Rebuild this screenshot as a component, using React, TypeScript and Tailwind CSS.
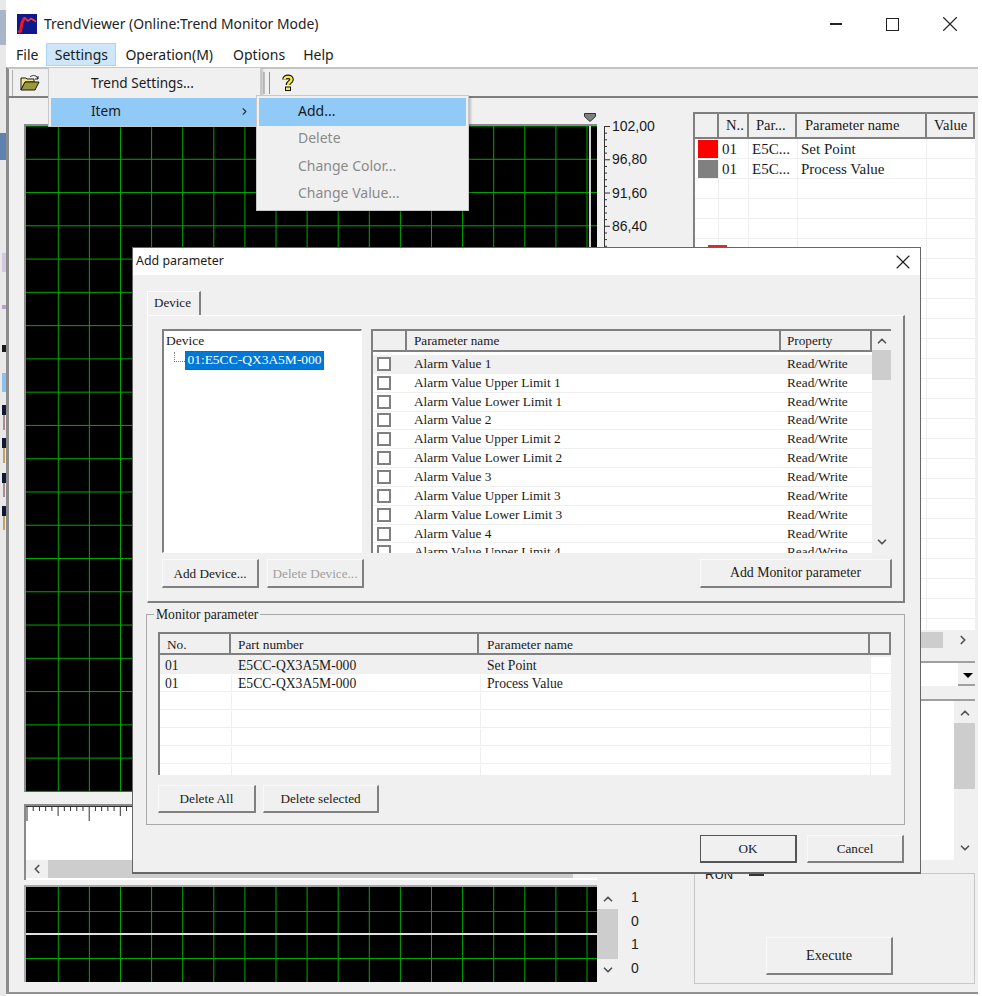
import { ChevronDown, ChevronLeft, ChevronRight, ChevronUp, X } from "lucide-react";
import type { ReactNode } from "react";

const gridXs = Array.from({ length: 18 }, (_, i) => 32.3 + i * 31.1);
const mainYs = Array.from({ length: 21 }, (_, i) => i * 33.27);

const alarmRows = [
  "Alarm Value 1",
  "Alarm Value Upper Limit 1",
  "Alarm Value Lower Limit 1",
  "Alarm Value 2",
  "Alarm Value Upper Limit 2",
  "Alarm Value Lower Limit 2",
  "Alarm Value 3",
  "Alarm Value Upper Limit 3",
  "Alarm Value Lower Limit 3",
  "Alarm Value 4",
  "Alarm Value Upper Limit 4",
];

// whatever of the desktop shows left of the window
const desktopBits = [
  "h-[10px]",
  "h-[35px] bg-[#a9b6c8]",
  "h-[88px]",
  "h-[27px] bg-[#5f82b0]",
  "h-[93px]",
  "ml-[2px] h-[19px] bg-[#d4c8e0]",
  "h-[33px]",
  "ml-[2px] h-[4px] bg-[#b6a0cc]",
  "h-[36px]",
  "ml-[2px] h-[7px] bg-[#1a1a1a]",
  "h-[21px]",
  "ml-[2px] h-[19px] bg-[#8fc0ec]",
  "h-[13px]",
  "ml-[2px] h-[10px] bg-[#111830]",
  "ml-[3px] h-[15px] w-[2px] bg-[#b08a90]",
  "h-[8px]",
  "ml-[2px] h-[10px] bg-[#111830]",
  "ml-[3px] h-[15px] w-[2px] bg-[#c8a060]",
  "h-[10px]",
  "ml-[2px] h-[10px] bg-[#111830]",
  "ml-[3px] h-[14px] w-[2px] bg-[#b08a90]",
  "h-[9px]",
  "ml-[2px] h-[10px] bg-[#111830]",
  "ml-[3px] h-[14px] w-[2px] bg-[#c8a060]",
];

function Grid({ height, ys, children }: { height: number; ys: number[]; children?: ReactNode }) {
  return (
    <svg width="571" height={height} className="block shrink-0">
      <rect width="571" height={height} fill="#000" />
      {gridXs.map((x) => (
        <line key={x} x1={x} x2={x} y1="0" y2={height} stroke="#00a800" strokeWidth="1" />
      ))}
      {ys.map((y) => (
        <line key={y} x1="0" x2="571" y1={y} y2={y} stroke="#00a800" strokeWidth="1" />
      ))}
      {children}
    </svg>
  );
}

function Btn({ children, disabled, size, def }: { children: ReactNode; disabled?: boolean; size?: string; def?: boolean }) {
  return (
    <div
      className={`flex h-full items-center justify-center border-t border-l border-b-2 border-r-2 bg-[#f0f0f0] ${size ?? "text-[13.2px]"} ${
        def ? "border-[#555555]" : "border-t-[#fafafa] border-l-[#fafafa] border-b-[#808080] border-r-[#808080]"
      } ${disabled ? "text-[#a0a0a0]" : "text-[#1a1a1a]"}`}
    >
      {children}
    </div>
  );
}

function HeaderCell({ children, width }: { children?: ReactNode; width: string }) {
  return (
    <div className={`flex h-full shrink-0 items-center overflow-hidden whitespace-nowrap border-r-2 border-b-2 border-[#808080] bg-[#f0f0f0] ${width}`}>
      {children}
    </div>
  );
}

function AppIcon() {
  return (
    <svg width="20" height="20" viewBox="0 0 20 20" className="shrink-0">
      <rect width="20" height="20" fill="#10188c" />
      <path d="M1.500 18.500 L3.500 17 L5 9 L7.500 3.500" fill="none" stroke="#f01818" strokeWidth="3" />
      <path d="M7.500 3.500 L11 7 L14 4.500 L19 7.500" fill="none" stroke="#f04040" strokeWidth="1.600" />
    </svg>
  );
}

function FolderIcon() {
  return (
    <svg width="20" height="18" viewBox="0 0 20 18">
      <path d="M1 4h5l1 1h7v3H5L1 16z" fill="#f4e58a" stroke="#1c1c10" strokeWidth="1" />
      <path d="M5 8h14l-4 8H1z" fill="#9a9a3c" stroke="#1c1c10" strokeWidth="1" />
      <path d="M10 3c2-2 5-2 7 0l1 2m0-3v3h-3" fill="none" stroke="#222" strokeWidth="1" />
    </svg>
  );
}

function HelpIcon() {
  return (
    <svg width="12" height="17" viewBox="0 0 12 17">
      <path d="M2.500 5.500C2.500 2 9.500 2 9.500 5.500C9.500 8 6 8 6 11" fill="none" stroke="#111" strokeWidth="4.600" />
      <path d="M2.500 5.500C2.500 2 9.500 2 9.500 5.500C9.500 8 6 8 6 11" fill="none" stroke="#f6ee3a" strokeWidth="2.400" />
      <rect x="3.500" y="13" width="5" height="3.500" fill="#f6ee3a" stroke="#111" />
    </svg>
  );
}

function Scroll({ thumbTop, thumbHeight, up, down, className }: { thumbTop: string; thumbHeight: string; up: string; down: string; className: string }) {
  return (
    <div className={`flex flex-col items-center bg-[#f0f0f0] ${className}`}>
      <ChevronUp size={14} strokeWidth={3} className={`shrink-0 text-[#555] ${up}`} />
      <div className={`w-full shrink-0 bg-[#cdcdcd] ${thumbTop} ${thumbHeight}`} />
      <div className="flex-1" />
      <ChevronDown size={14} strokeWidth={3} className={`shrink-0 text-[#555] ${down}`} />
    </div>
  );
}

function Ruler() {
  return (
    <svg width="571" height="16" className="block shrink-0">
      <line x1="0" x2="571" y1="0.500" y2="0.500" stroke="#333" />
      {Array.from({ length: 92 }, (_, i) => (
        <line
          key={i}
          x1={1 + i * 6.22}
          x2={1 + i * 6.22}
          y1="0"
          y2={i % 10 === 0 ? 15 : i % 5 === 0 ? 10 : 5}
          stroke="#333"
          strokeWidth="1"
        />
      ))}
    </svg>
  );
}

export default function App() {
  return (
    <div className="relative flex h-[996px] w-[982px] overflow-hidden bg-white font-['Noto_Sans',sans-serif] text-[#1a1a1a]">
      <div className="flex w-[6px] shrink-0 flex-col bg-[#e8e8e8]">
        {desktopBits.map((c, i) => (
          <div key={i} className={c} />
        ))}
      </div>

      <div className="flex h-[994px] w-[972px] shrink-0 flex-col border-b-2 border-[#909090]">
        {/* title bar */}
        <div className="flex h-[41px] shrink-0 items-center bg-white pt-[7px] pl-[11px]">
          <AppIcon />
          <span className="ml-[7px] text-[13.900px] leading-none text-[#222]">TrendViewer (Online:Trend Monitor Mode)</span>
          <div className="ml-auto flex items-center pr-[15px] text-[#222]">
            <div className="mr-[44px] h-[1.500px] w-[12px] bg-[#222]" />
            <div className="mr-[38px] h-[13px] w-[13px] border border-[#222]" />
            <X size={26} strokeWidth={1} />
          </div>
        </div>

        {/* menu bar */}
        <div className="flex h-[26px] shrink-0 items-center bg-white text-[14px]">
          <span className="ml-[10px] text-[#222]">File</span>
          <span className="ml-[8px] flex h-[23px] w-[70px] items-center justify-center border border-[#a8d4f5] bg-[#cde6f9]">Settings</span>
          <span className="ml-[9px]">Operation(M)</span>
          <span className="ml-[20px]">Options</span>
          <span className="ml-[18px]">Help</span>
        </div>

        {/* toolbar */}
        <div className="flex h-[31px] shrink-0 items-center border-t-2 border-b-2 border-l-[3px] border-t-[#c4c4c4] border-b-[#808080] border-l-[#8c8c8c] bg-[#f0f0f0]">
          <div className="ml-[3px] h-[26px] w-px bg-[#b0b0b0]" />
          <div className="ml-[7px]">
            <FolderIcon />
          </div>
          <div className="ml-[223px] h-[22px] w-[2px] bg-[#c0c0c0]" />
          <div className="ml-[4px] h-[22px] w-[1px] bg-[#909090]" />
          <div className="ml-[12px]">
            <HelpIcon />
          </div>
        </div>

        {/* main area */}
        <div className="flex min-h-0 flex-1 border-l-[3px] border-[#8c8c8c] bg-[#f0f0f0]">
          <div className="w-[684px] shrink-0 pl-[15px]">
            <div className="flex h-[26px] items-start pl-[560px] pt-[15px]">
              <svg width="12" height="9" viewBox="0 0 12 9">
                <path d="M0.500 0.500h11v3L6 8.500 0.500 3.500z" fill="#808080" stroke="#333" strokeWidth="1" />
              </svg>
            </div>
            <div className="flex h-[668px]">
              <div className="border-t-2 border-l-2 border-[#8a8a8a]">
                <Grid height={666} ys={mainYs}>
                  <line x1="564" x2="564" y1="0" y2="666" stroke="#d0d0d0" strokeWidth="2" />
                </Grid>
              </div>
              <div className="mt-[2px] ml-[7px] flex">
                <svg width="8" height="666" className="shrink-0">
                  <line x1="0.500" x2="0.500" y1="0" y2="666" stroke="#333" />
                  {Array.from({ length: 100 }, (_, i) => (
                    <line key={i} x1="0" x2={i % 5 === 0 ? 6 : 3} y1={0.5 + i * 6.654} y2={0.5 + i * 6.654} stroke="#333" />
                  ))}
                </svg>
                <div className="-mt-[9px] flex flex-col font-['Liberation_Sans',sans-serif] text-[14px]">
                  {["102,00", "96,80", "91,60", "86,40"].map((v) => (
                    <span key={v} className="h-[33.270px] leading-[18px]">
                      {v}
                    </span>
                  ))}
                </div>
              </div>
            </div>

            {/* ruler and its scroll bar */}
            <div className="mt-[12px] flex h-[76px] w-[573px] flex-col border-t-2 border-l-2 border-[#8a8a8a] bg-white">
              <Ruler />
              <div className="flex-1" />
              <div className="mb-[2px] flex h-[18px] items-center bg-[#f0f0f0]">
                <ChevronLeft size={14} strokeWidth={3} className="ml-[4px] shrink-0 text-[#555]" />
                <div className="ml-[4px] h-full w-[525px] bg-[#cdcdcd]" />
              </div>
            </div>

            {/* lower chart */}
            <div className="mt-[5px] flex h-[97px]">
              <div className="border-t-2 border-l-2 border-[#a8a8a8]">
                <Grid height={95} ys={[24.500, 71.500]}>
                  <line x1="0" x2="571" y1="47" y2="47" stroke="#e0e0e0" strokeWidth="2" />
                </Grid>
              </div>
              <div className="mt-[2px] w-[21px] shrink-0">
                <Scroll thumbTop="mt-[3px]" thumbHeight="h-[50px]" up="mt-[5px]" down="mb-[5px]" className="h-full" />
              </div>
              <div className="ml-[13px] flex flex-col pt-[2px] font-['Liberation_Sans',sans-serif] text-[14px] text-[#222]">
                {["1", "0", "1", "0"].map((v, i) => (
                  <span key={i} className="h-[23.700px] leading-[20px]">
                    {v}
                  </span>
                ))}
              </div>
            </div>
          </div>

          {/* right column */}
          <div className="w-[282px] shrink-0 pt-[14px] font-['Liberation_Serif',serif] text-[15px]">
            <div className="h-[518px] overflow-hidden border-l-2 border-t-2 border-[#808080] bg-white">
              <div className="flex h-[25px] text-[14.600px]">
                <HeaderCell width="w-[24px]" />
                <HeaderCell width="w-[30px] pl-[7px]">N..</HeaderCell>
                <HeaderCell width="w-[48px] pl-[7px]">Par...</HeaderCell>
                <HeaderCell width="w-[130px] pl-[8px]">Parameter name</HeaderCell>
                <HeaderCell width="w-[48px] border-r-0 pl-[7px]">Value</HeaderCell>
              </div>
              {Array.from({ length: 25 }, (_, i) => (
                <div key={i} className="flex h-[20px] border-b border-[#efefef] leading-[20px]">
                  <div className="flex w-[24px] shrink-0 justify-end border-r border-[#efefef] pt-px">
                    {i === 0 && <div className="h-[18px] w-[20px] bg-[#ff0000]" />}
                    {i === 1 && <div className="h-[18px] w-[20px] bg-[#808080]" />}
                  </div>
                  <div className="w-[30px] shrink-0 border-r border-[#efefef] pl-[3px]">{i < 2 ? "01" : ""}</div>
                  <div className="w-[49px] shrink-0 border-r border-[#efefef] pl-[3px]">{i < 2 ? "E5C..." : ""}</div>
                  <div className="w-[129px] shrink-0 border-r border-[#efefef] pl-[3px]">
                    {i === 0 ? "Set Point" : i === 1 ? "Process Value" : ""}
                  </div>
                </div>
              ))}
            </div>
            <div className="flex h-[20px] items-center justify-end bg-[#f0f0f0] py-[2px] pr-[5px]">
              <div className="mr-[13px] h-full w-[24px] bg-[#cdcdcd]" />
              <ChevronRight size={14} strokeWidth={3} className="text-[#555]" />
            </div>
            <div className="mt-[11px] flex h-[25px] justify-end border-t-2 border-[#a0a0a0] bg-white">
              <div className="flex w-[17px] flex-col items-center justify-center border-b-2 border-[#a0a0a0] bg-[#f0f0f0] pt-[3px] pl-[3px]">
                <div className="h-0 w-0 border-x-[5px] border-t-[5px] border-x-transparent border-t-black" />
              </div>
            </div>
            <div className="mt-[13px] flex h-[161px] justify-end border-t-2 border-[#a0a0a0] bg-white">
              <Scroll thumbTop="mt-[3px]" thumbHeight="h-[66px]" up="mt-[5px]" down="mb-[5px]" className="h-full w-[21px]" />
            </div>
            <div className="relative mt-[13px] ml-px h-[111px] border border-[#c8c8c8] pt-[63px] pl-[71px]">
              <span className="absolute -top-[6px] left-[10px] font-['Liberation_Sans',sans-serif] text-[13px] leading-none">RUN</span>
              <div className="absolute top-0 left-[54px] h-[2px] w-[15px] bg-[#333]" />
              <div className="h-[38px] w-[127px]">
                <Btn size="text-[14.300px]">Execute</Btn>
              </div>
            </div>
          </div>
        </div>
      </div>

      {/* settings menu */}
      <div className="absolute top-[67px] left-[48px] flex h-[60px] w-[213px] flex-col border border-[#c8c8c8] bg-[#f0f0f0] px-[2px] pt-[2px] text-[13.600px] shadow-[2px_2px_2px_rgba(0,0,0,0.2)]">
        <div className="flex h-[28px] items-center pb-[1px] pl-[40px]">Trend Settings...</div>
        <div className="flex h-[28px] items-center justify-between bg-[#91c9f7] pr-[8px] pb-[2px] pl-[40px]">
          <span>Item</span>
          <ChevronRight size={11} strokeWidth={2.500} className="mt-[1px] text-[#333]" />
        </div>
      </div>
      <div className="absolute top-[95px] left-[256px] flex h-[116px] w-[213px] flex-col border border-[#c8c8c8] bg-[#f0f0f0] p-[2px] text-[14px] text-[#8a8a8a] shadow-[2px_2px_2px_rgba(0,0,0,0.2)]">
        <div className="flex h-[28px] items-center bg-[#91c9f7] pb-[2px] pl-[39px] text-[#1a1a1a]">Add...</div>
        <div className="flex h-[27.500px] items-center pb-[5px] pl-[39px]">Delete</div>
        <div className="flex h-[27.500px] items-center pb-[2px] pl-[39px]">Change Color...</div>
        <div className="flex h-[27.500px] items-center pb-[3px] pl-[39px]">Change Value...</div>
      </div>

      {/* list row peeking out above the dialog */}
      <div className="absolute top-[245px] left-[708px] h-[2px] w-[19px] bg-[#c83232]" />

      {/* add parameter dialog */}
      <div className="absolute top-[247px] left-[132px] flex h-[627px] w-[789px] flex-col border border-[#666] border-b-2 bg-[#f0f0f0] font-['Liberation_Serif',serif] text-[13.500px] text-[#1a1a1a]">
        <div className="flex h-[27px] shrink-0 items-center justify-between bg-white pr-[5px] pl-[3px] font-['Noto_Sans',sans-serif] text-[12.400px]">
          <span className="pb-px">Add parameter</span>
          <X size={24} strokeWidth={1.100} />
        </div>

        <div className="flex flex-col pl-[14px]">
          <div className="mt-[16px] flex h-[24px] w-[54px] items-center justify-center border-t border-l border-r-2 border-t-white border-l-white border-r-[#808080] pr-[2px] pb-[2px] text-[13px]">
            Device
          </div>
          <div className="h-[288px] w-[758px] border-t border-l border-r-2 border-b-2 border-t-white border-l-white border-r-[#808080] border-b-[#808080] pt-[13px] pl-[14px]">
            <div className="flex h-[224px]">
              {/* device tree */}
              <div className="w-[200px] shrink-0 border-t-2 border-l-2 border-r border-b border-t-[#808080] border-l-[#808080] border-r-white border-b-white bg-white pt-[1px] pl-[2px]">
                <div className="leading-[18px]">Device</div>
                <div className="mt-px flex items-start pl-[8px]">
                  <div className="mt-[1px] h-[10px] w-[11px] border-l border-b border-dotted border-[#808080]" />
                  <div className="flex h-[19px] w-[139px] items-center justify-center whitespace-nowrap border border-dotted border-[#7a4a10] bg-[#0078d7] text-white">
                    01:E5CC-QX3A5M-000
                  </div>
                </div>
              </div>

              {/* parameter list */}
              <div className="ml-[9px] flex w-[520px] shrink-0 border-t-2 border-l-2 border-[#808080] bg-white">
                <div className="flex w-[499px] shrink-0 flex-col overflow-hidden">
                  <div className="flex h-[21px] shrink-0 text-[13.200px]">
                    <HeaderCell width="w-[34px]" />
                    <HeaderCell width="w-[374px] pl-[7px] pt-[1px]">Parameter name</HeaderCell>
                    <HeaderCell width="w-[91px] pl-[6px] pt-[1px]">Property</HeaderCell>
                  </div>
                  <div className="pt-[3px] text-[13.300px]">
                    {alarmRows.map((name, i) => (
                      <div key={name} className={`flex h-[18.850px] items-center border-b border-[#efefef] ${i === 0 ? "bg-[#f0f0f0]" : ""}`}>
                        <div className="ml-[4px] h-[14px] w-[14px] shrink-0 border-2 border-[#808080] bg-white" />
                        <div className="ml-[23px] w-[373px] shrink-0">{name}</div>
                        <div className="w-[90px] shrink-0">Read/Write</div>
                      </div>
                    ))}
                  </div>
                </div>
                <Scroll thumbTop="mt-[2px]" thumbHeight="h-[30px]" up="mt-[3px]" down="mb-[4px]" className="w-[19px] shrink-0" />
              </div>
            </div>
            <div className="mt-[6px] flex h-[29px]">
              <div className="w-[97px]">
                <Btn size="pt-px text-[13.200px]">Add Device...</Btn>
              </div>
              <div className="ml-[8px] w-[97px]">
                <Btn disabled size="pt-px text-[13.200px]">
                  Delete Device...
                </Btn>
              </div>
              <div className="ml-[336px] w-[192px]">
                <Btn size="pt-px text-[13.800px]">Add Monitor parameter</Btn>
              </div>
            </div>
          </div>

          {/* monitor parameter group */}
          <div className="relative mt-[11px] -ml-px h-[211px] w-[759px] border border-[#a8a8a8] pt-[17px] pl-[11px]">
            <span className="absolute -top-[9px] left-[7px] bg-[#f0f0f0] px-[2px] text-[13.600px] leading-[17px]">Monitor parameter</span>
            <div className="h-[143px] w-[733px] overflow-hidden border-t-2 border-l-2 border-[#808080] bg-white text-[13.650px]">
              <div className="flex h-[21px] text-[13.300px]">
                <HeaderCell width="w-[71px] pl-[7px] pt-[2px]">No.</HeaderCell>
                <HeaderCell width="w-[248px] pl-[7px] pt-[2px]">Part number</HeaderCell>
                <HeaderCell width="w-[391px] pl-[8px] pt-[2px]">Parameter name</HeaderCell>
                <HeaderCell width="w-[21px] border-r-0" />
              </div>
              {Array.from({ length: 7 }, (_, i) => (
                <div key={i} className={`flex border-b border-[#efefef] leading-[17px] ${i === 0 ? "h-[19px] bg-[#f0f0f0] pt-[2px]" : "h-[18px] pt-px"}`}>
                  <div className="w-[72px] shrink-0 border-r border-[#efefef] pl-[5px]">{i < 2 ? "01" : ""}</div>
                  <div className="w-[249px] shrink-0 border-r border-[#efefef] pl-[6px]">{i < 2 ? "E5CC-QX3A5M-000" : ""}</div>
                  <div className="w-[390px] shrink-0 border-r border-[#efefef] pl-[6px]">
                    {i === 0 ? "Set Point" : i === 1 ? "Process Value" : ""}
                  </div>
                  <div className="flex-1 bg-white" />
                </div>
              ))}
            </div>
            <div className="mt-[10px] flex h-[28px]">
              <div className="w-[98px]">
                <Btn>Delete All</Btn>
              </div>
              <div className="ml-[7px] w-[116px]">
                <Btn>Delete selected</Btn>
              </div>
            </div>
          </div>

          <div className="mt-[10px] flex h-[28px] w-[757px] justify-end">
            <div className="w-[97px]">
              <Btn def>OK</Btn>
            </div>
            <div className="ml-[10px] w-[97px]">
              <Btn>Cancel</Btn>
            </div>
          </div>
        </div>
      </div>
    </div>
  );
}
